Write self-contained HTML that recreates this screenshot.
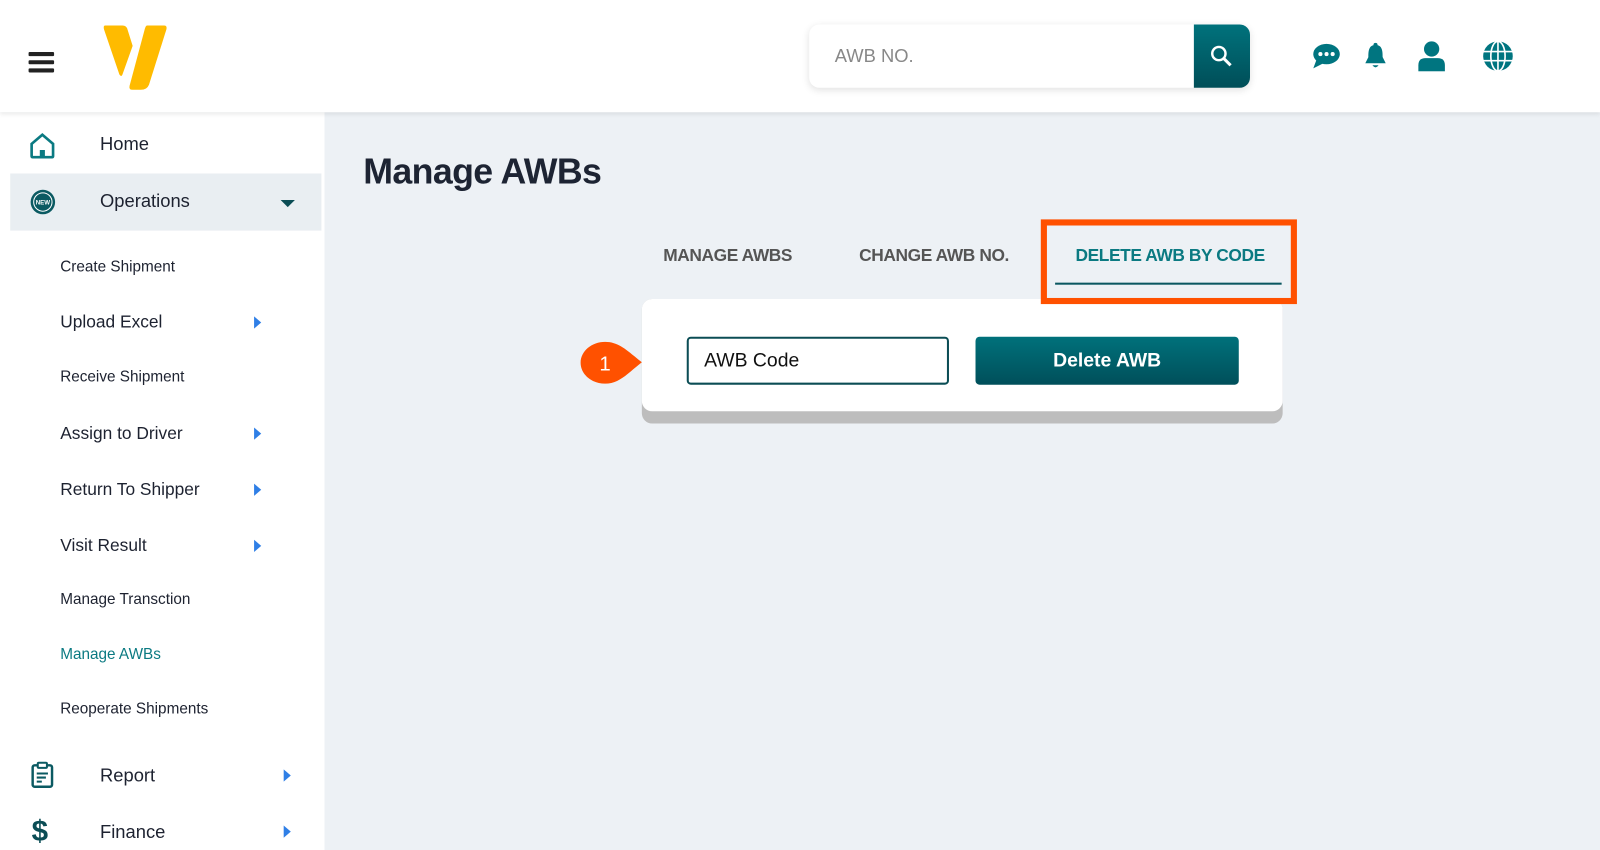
<!DOCTYPE html>
<html><head><meta charset="utf-8"><style>
*{box-sizing:border-box;margin:0;padding:0}
html,body{width:1600px;height:850px;overflow:hidden;background:#edf1f5;font-family:"Liberation Sans",sans-serif}
#w{position:absolute;left:0;top:0;width:1568px;height:833px;transform:scale(1.020408);transform-origin:0 0}
.hdr{position:absolute;left:0;top:0;width:1568px;height:110px;background:#fff;box-shadow:0 2px 4px rgba(0,0,0,.08);z-index:2}
.side{position:absolute;left:0;top:110px;width:318px;height:723px;background:#fff}
.a{position:absolute}
.t{position:absolute;color:#1d2230;white-space:nowrap}
.sub{font-size:15px;left:59px}
.sub2{font-size:17px;left:59px}
.arr{position:absolute;width:0;height:0;border-top:6px solid transparent;border-bottom:6px solid transparent;border-left:7px solid #2f7fe6}
.tab{font-size:17px;font-weight:bold;letter-spacing:-0.4px}
</style></head><body><div id="w">
<div class="hdr">
 <div class="a" style="left:28px;top:51px;width:25px;height:4px;background:#222;border-radius:1px"></div>
 <div class="a" style="left:28px;top:59px;width:25px;height:4px;background:#222;border-radius:1px"></div>
 <div class="a" style="left:28px;top:67px;width:25px;height:4px;background:#222;border-radius:1px"></div>
 <svg class="a" style="left:100px;top:23px" width="66" height="66" viewBox="0 0 66 66">
  <path d="M3 2 H20 Q24 2 25 6 L30 22 L20 50 Q19 53 17 50 L2 6 Q1 2 3 2Z" fill="#ffbb00"/>
  <path d="M44 2 H61 Q64 2 63 6 L46 60 Q44 65 38 65 H30 Q26 65 27 61 L42 5 Q43 2 44 2Z" fill="#ffbb00"/>
 </svg>
 <div class="a" style="left:793px;top:24px;width:432px;height:62px;background:#fff;border-radius:10px;box-shadow:0 2px 8px rgba(0,0,0,.12)"></div>
 <div class="t" style="left:818px;top:45px;font-size:18px;color:#888">AWB NO.</div>
 <div class="a" style="left:1170px;top:24px;width:55px;height:62px;background:linear-gradient(#00727c,#004e58);border-radius:0 10px 10px 0"></div>
 <svg class="a" style="left:1185px;top:43px" width="24" height="24" viewBox="0 0 24 24"><circle cx="9.5" cy="9.5" r="6.5" stroke="#fff" stroke-width="2.4" fill="none"/><path d="M14 14 L21 21" stroke="#fff" stroke-width="3"/></svg>
 <svg class="a" style="left:1285px;top:42px" width="30" height="26" viewBox="0 0 30 26"><ellipse cx="15" cy="11" rx="13" ry="10" fill="#007580"/><path d="M5 17 L2 25 L12 20Z" fill="#007580"/><circle cx="9" cy="11" r="2" fill="#fff"/><circle cx="15" cy="11" r="2" fill="#fff"/><circle cx="21" cy="11" r="2" fill="#fff"/></svg>
 <svg class="a" style="left:1336px;top:41px" width="24" height="28" viewBox="0 0 24 28"><circle cx="12" cy="3" r="2" fill="#007580"/><path d="M12 3 C5 3 5 10 5 15 L2 21 H22 L19 15 C19 10 19 3 12 3Z" fill="#007580"/><path d="M9 23 Q12 27 15 23Z" fill="#007580"/></svg>
 <svg class="a" style="left:1389px;top:40px" width="28" height="30" viewBox="0 0 28 30"><circle cx="14" cy="8" r="7.5" fill="#007580"/><path d="M1 30 V24 Q1 17 8 17 H20 Q27 17 27 24 V30Z" fill="#007580"/></svg>
 <svg class="a" style="left:1453px;top:40px" width="30" height="30" viewBox="0 0 30 30"><circle cx="15" cy="15" r="14.5" fill="#007580"/><path d="M0 10.5H30M0 19.5H30M15 0V30" stroke="#fff" stroke-width="1.6"/><ellipse cx="15" cy="15" rx="7" ry="14.5" stroke="#fff" stroke-width="1.6" fill="none"/></svg>
</div>
<div class="side">
 <svg class="a" style="left:28px;top:20px" width="27" height="26" viewBox="0 0 27 26"><path d="M3 11 L13.5 2 L24 11 V23 Q24 24 23 24 H4 Q3 24 3 23Z" stroke="#0b7a82" stroke-width="2.6" fill="none"/><rect x="11" y="17" width="5" height="7" fill="#0b7a82"/></svg>
 <div class="t" style="left:98px;top:21px;font-size:18px">Home</div>
 <div class="a" style="left:10px;top:60px;width:305px;height:56px;background:#e9eef2"></div>
 <svg class="a" style="left:29px;top:75px" width="26" height="26" viewBox="0 0 26 26"><circle cx="13" cy="13" r="12" fill="#0b5a62"/><circle cx="13" cy="13" r="9" fill="none" stroke="#fff" stroke-width="1"/><text x="13" y="15.5" font-size="6" fill="#fff" text-anchor="middle" font-family="Liberation Sans" font-weight="bold">NEW</text></svg>
 <div class="t" style="left:98px;top:77px;font-size:18px">Operations</div>
 <div class="a" style="left:275px;top:86px;border-left:7px solid transparent;border-right:7px solid transparent;border-top:7px solid #0b4d55"></div>
 <div class="t sub" style="top:143px">Create Shipment</div>
 <div class="t sub2" style="top:196px">Upload Excel</div><div class="arr" style="left:249px;top:200px"></div>
 <div class="t sub" style="top:251px">Receive Shipment</div>
 <div class="t sub2" style="top:305px">Assign to Driver</div><div class="arr" style="left:249px;top:309px"></div>
 <div class="t sub2" style="top:360px">Return To Shipper</div><div class="arr" style="left:249px;top:364px"></div>
 <div class="t sub2" style="top:415px">Visit Result</div><div class="arr" style="left:249px;top:419px"></div>
 <div class="t sub" style="top:469px">Manage Transction</div>
 <div class="t sub" style="top:523px;color:#0b7a82">Manage AWBs</div>
 <div class="t sub" style="top:576px">Reoperate Shipments</div>
 <svg class="a" style="left:30px;top:636px" width="23" height="27" viewBox="0 0 23 27"><rect x="2" y="4" width="19" height="21" rx="2" stroke="#0b5a62" stroke-width="2.4" fill="none"/><rect x="7" y="1.5" width="9" height="5" rx="1" stroke="#0b5a62" stroke-width="2" fill="#fff"/><path d="M6 12H17M6 16H15M6 20H11" stroke="#0b5a62" stroke-width="2"/></svg>
 <div class="t" style="left:98px;top:640px;font-size:18px">Report</div><div class="arr" style="left:278px;top:644px"></div>
 <div class="t" style="left:31px;top:689px;font-size:29px;font-weight:bold;color:#0b4d55">$</div>
 <div class="t" style="left:98px;top:695px;font-size:18px">Finance</div><div class="arr" style="left:278px;top:699px"></div>
</div>
<div class="t" style="left:356px;top:149px;font-size:35px;font-weight:bold;color:#1d2433;letter-spacing:-0.6px">Manage AWBs</div>
<div class="t tab" style="left:650px;top:241px;color:#555">MANAGE AWBS</div>
<div class="t tab" style="left:842px;top:241px;color:#555">CHANGE AWB NO.</div>
<div class="t tab" style="left:1054px;top:241px;color:#0b7a82">DELETE AWB BY CODE</div>
<div class="a" style="left:629px;top:293px;width:628px;height:122px;background:#bdbdbd;border-radius:10px"></div>
<div class="a" style="left:629px;top:293px;width:628px;height:110px;background:#fff;border-radius:10px"></div>
<div class="a" style="left:1034px;top:277px;width:222px;height:2px;background:#0a5760"></div>
<div class="a" style="left:1020px;top:215px;width:251px;height:83px;border:6px solid #ff5100"></div>
<div class="a" style="left:673px;top:330px;width:257px;height:47px;border:2px solid #0b4d55;border-radius:4px;background:#fff"></div>
<div class="t" style="left:690px;top:343px;font-size:19px;color:#111">AWB Code</div>
<div class="a" style="left:956px;top:330px;width:258px;height:47px;background:linear-gradient(#00717b,#004f5a);border-radius:4px;color:#fff;font-size:19px;font-weight:bold;text-align:center;line-height:47px">Delete AWB</div>
<svg class="a" style="left:567px;top:334px" width="64" height="44" viewBox="0 0 64 44"><path d="M26 1 C40 1 48 10 62 21 C48 32 40 42 26 42 C13 42 2 33 2 21.5 C2 10 13 1 26 1Z" fill="#ff5100"/><text x="26" y="29" font-size="20" fill="#fff" text-anchor="middle" font-family="Liberation Sans">1</text></svg>
</div></body></html>
